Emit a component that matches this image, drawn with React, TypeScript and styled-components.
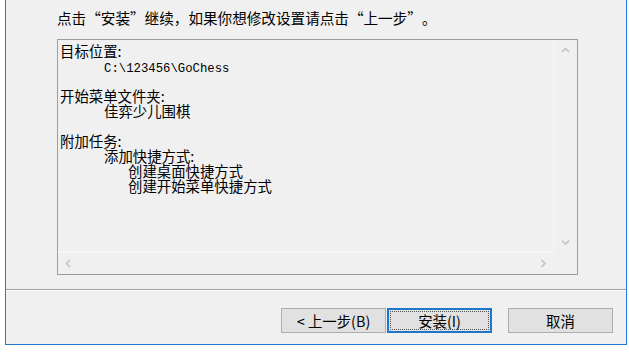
import React from 'react';
import styled, { createGlobalStyle } from 'styled-components';

const GlobalStyle = createGlobalStyle`
  html, body {
    margin: 0;
    padding: 0;
    background: #ffffff;
  }
  body {
    font-family: "Noto Sans CJK SC", "Liberation Sans", sans-serif;
    color: #000000;
  }
`;

const Window = styled.div`
  box-sizing: border-box;
  width: 622px;
  height: 345px;
  margin-left: 5px;
  border: 1px solid #1f7ad0;
  border-top: none;
  background: #f0f0f0;
  display: flex;
  flex-direction: column;
`;

const Body = styled.div`
  height: 289px;
  padding: 9px 0 0 51px;
  box-sizing: border-box;
`;

const Heading = styled.div`
  font-size: 14.6px;
  line-height: 18px;
  height: 18px;
  white-space: nowrap;
`;

// quote marks take a full cell, as in the dialog's system font
const Quote = styled.span<{ $open?: boolean }>`
  display: inline-block;
  width: 1em;
  text-align: ${p => (p.$open ? 'right' : 'left')};
`;

const SummaryBox = styled.div`
  box-sizing: border-box;
  margin-top: 12px;
  width: 521px;
  height: 236px;
  border: 1px solid #9d9d9d;
  display: grid;
  grid-template-columns: 1fr 23px;
  grid-template-rows: 1fr 21px;
`;

const Content = styled.div`
  border-right: 1px dotted #ffffff;
  border-bottom: 1px dotted #ffffff;
  padding: 3px 0 0 2px;
  overflow: hidden;
`;

const Line = styled.div<{ $level: number }>`
  font-size: 14.4px;
  line-height: 15px;
  height: 15px;
  white-space: nowrap;
  padding-left: ${p => [0, 44, 68][p.$level]}px;
`;

const Mono = styled.span`
  font-family: "Liberation Mono", monospace;
  font-size: 12.3px;
`;

const VScroll = styled.div`
  display: flex;
  flex-direction: column;
  justify-content: space-between;
`;

const HScroll = styled.div`
  display: flex;
  justify-content: space-between;
`;

const ArrowCell = styled.div`
  width: 21px;
  height: 21px;
  display: flex;
  align-items: center;
  justify-content: center;
  align-self: center;
`;

const Separator = styled.div`
  height: 0;
  border-top: 1px solid #a0a0a0;
  border-bottom: 1px solid #ffffff;
`;

const Footer = styled.div`
  display: flex;
  justify-content: flex-end;
  padding: 17px 13px 0 0;
`;

const Button = styled.button<{ $primary?: boolean; $gap?: number }>`
  position: relative;
  box-sizing: border-box;
  width: 105px;
  height: 25px;
  margin-left: ${p => p.$gap ?? 0}px;
  padding: 0;
  background: #e1e1e1;
  border: 1px solid ${p => (p.$primary ? '#1f75c8' : '#adadad')};
  box-shadow: ${p => (p.$primary ? 'inset 0 0 0 1px #1f75c8' : 'none')};
  font-family: "Noto Sans CJK SC", "Liberation Sans", sans-serif;
  font-size: 14.4px;
  line-height: 20px;
  color: #000000;

  ${p =>
    p.$primary &&
    `
    &::after {
      content: '';
      position: absolute;
      inset: 2px;
      border: 1px dotted #555555;
    }
  `}
`;

type Dir = 'up' | 'down' | 'left' | 'right';

const arrowPoints: Record<Dir, string> = {
  up: '1,5 4.5,1.5 8,5',
  down: '1,1.5 4.5,5 8,1.5',
  left: '5,1 1.5,4.5 5,8',
  right: '1.5,1 5,4.5 1.5,8',
};

const Arrow = ({ dir }: { dir: Dir }) => {
  const wide = dir === 'up' || dir === 'down';
  return (
    <ArrowCell>
      <svg width={wide ? 9 : 7} height={wide ? 7 : 9} viewBox={wide ? '0 0 9 7' : '0 0 7 9'}>
        <polyline points={arrowPoints[dir]} fill="none" stroke="#c2c2c2" strokeWidth="1.6" />
      </svg>
    </ArrowCell>
  );
};

export default function App() {
  return (
    <div lang="zh-CN">
      <GlobalStyle />
      <Window>
        <Body>
          <Heading>
            点击<Quote $open>“</Quote>安装<Quote>”</Quote>继续，如果你想修改设置请点击<Quote $open>“</Quote>上一步<Quote>”</Quote>。
          </Heading>
          <SummaryBox>
            <Content>
              <Line $level={0}>目标位置:</Line>
              <Line $level={1}><Mono>C:\123456\GoChess</Mono></Line>
              <Line $level={0} />
              <Line $level={0}>开始菜单文件夹:</Line>
              <Line $level={1}>佳弈少儿围棋</Line>
              <Line $level={0} />
              <Line $level={0}>附加任务:</Line>
              <Line $level={1}>添加快捷方式:</Line>
              <Line $level={2}>创建桌面快捷方式</Line>
              <Line $level={2}>创建开始菜单快捷方式</Line>
            </Content>
            <VScroll>
              <Arrow dir="up" />
              <Arrow dir="down" />
            </VScroll>
            <HScroll>
              <Arrow dir="left" />
              <Arrow dir="right" />
            </HScroll>
            <div />
          </SummaryBox>
        </Body>
        <Separator />
        <Footer>
          <Button>&lt; 上一步(B)</Button>
          <Button $primary $gap={1}>安装(I)</Button>
          <Button $gap={16}>取消</Button>
        </Footer>
      </Window>
    </div>
  );
}
